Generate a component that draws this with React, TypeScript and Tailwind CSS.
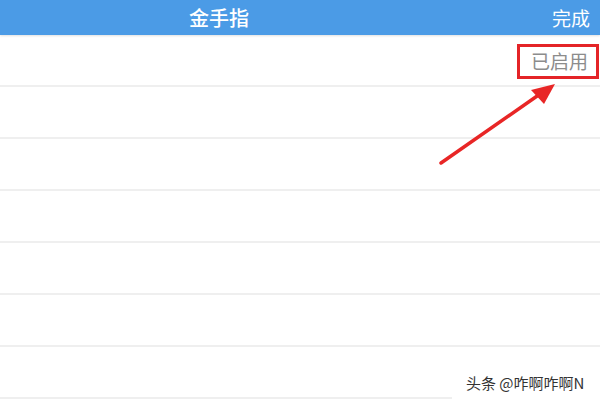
import React from "react";

const rows = [0, 1, 2, 3, 4, 5, 6];

export default function App() {
  return (
    <div
      className="relative w-[600px] h-[400px] overflow-hidden bg-white"
      style={{ fontFamily: '"Noto Sans CJK SC", "Noto Sans", sans-serif' }}
    >
      <div className="flex h-[35px] items-center bg-[#4b9be6] text-white shadow-[0_1px_2px_rgba(0,0,0,0.12)]">
        <div className="pl-[189px] text-[20px] font-medium leading-none">金手指</div>
        <div className="ml-auto pr-[10px] text-[19px] leading-none">完成</div>
      </div>
      <div className="flex flex-col">
        {rows.map((r) => (
          <div
            key={r}
            className={`${r === 0 ? "h-[52px]" : "h-[52px]"} flex items-center justify-end border-b-2 border-[#efefef]`}
          >
            {r === 0 && (
              <span className="pr-[12px] text-[19px] leading-none text-[#8c8c8c]">已启用</span>
            )}
          </div>
        ))}
      </div>

      {/* annotation box */}
      <div className="absolute left-[517px] top-[44px] h-[35px] w-[82px] border-[3px] border-[#e42428]" />

      {/* annotation arrow */}
      <svg className="absolute left-0 top-0" width="600" height="400" viewBox="0 0 600 400">
        <line x1="441" y1="163" x2="540" y2="94" stroke="#e82626" strokeWidth="3.5" strokeLinecap="round" />
        <polygon points="555,84 531,90 544,104" fill="#e82626" />
      </svg>

      {/* watermark */}
      <div className="absolute left-[452px] top-[364px] flex h-[36px] w-[148px] items-center bg-white pl-[14px]">
        <span
          className="text-[15px] leading-none text-[#333333]"
          style={{ textShadow: "0 0 1px #fff" }}
        >
          头条 @咋啊咋啊N
        </span>
      </div>
    </div>
  );
}
